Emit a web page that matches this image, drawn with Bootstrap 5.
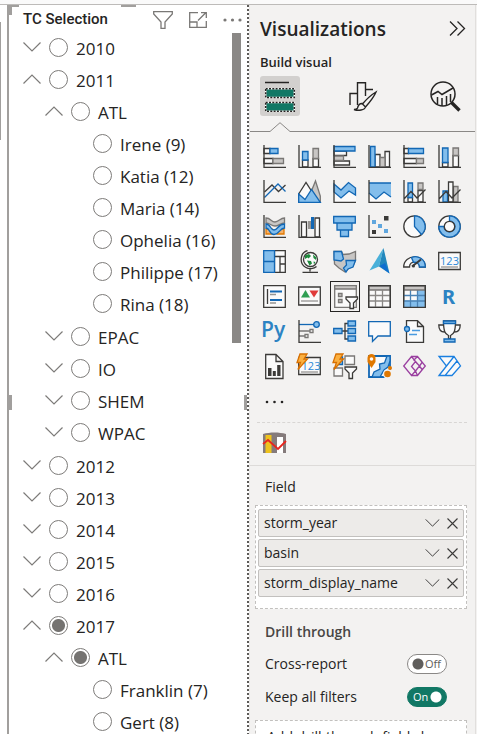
<!DOCTYPE html>
<html lang="en">
<head>
<meta charset="utf-8">
<meta name="viewport" content="width=device-width, initial-scale=1">
<title>TC Selection</title>
<link href="https://cdn.jsdelivr.net/npm/bootstrap@5.3.0/dist/css/bootstrap.min.css" rel="stylesheet">
<style>
body{font-family:"Open Sans","Noto Sans",sans-serif;color:#252423;background:#f3f2f1;font-size:14px;line-height:20px}
button{border:0;background:none;padding:0;color:inherit}
svg{display:block;overflow:visible}
.topstrip{height:5px;background:#fafafa;border-bottom:1px solid #bdbbb9}
.gutter{width:7px;background:#fff;padding-top:17px}
.gutter div{height:118px;width:1px;background:#a19f9d}
.visual{background:#fff;border-left:2px solid #a19f9d;min-width:0}
.visual-head{height:26px;padding:4px 5px 0 14px}
.visual-head h2{font:500 15px/20px Roboto,sans-serif}
.visual-head button{color:#7a7876}
.handle{position:absolute;background:#a19f9d}
.h-top{left:0;top:0;width:10px;height:2px}
.h-corner{left:0;top:0;width:3px;height:10px}
.h-mid{left:47%;top:0;width:15px;height:2px}
.h-left{left:0;top:390px;width:3px;height:15px}
.h-right{right:0;top:390px;width:3px;height:15px}
.scroll-thumb{position:absolute;right:6px;top:28px;width:9px;height:310px;background:#8a8886}
.edge{width:3px;background:linear-gradient(90deg,#fff,#e4e2e0)}
.edge div{width:2px;height:100%;background:repeating-linear-gradient(#5c5a58 0 2px,#fff 2px 4px)}
.tree{font-size:17px;line-height:32px}
.tree ul{padding-left:22px;padding-bottom:1px}
.node{height:32px;padding-left:14px}
.node label{margin-left:8px;white-space:nowrap;padding-top:4px}
.twist{width:18px;height:32px;margin-right:8px;color:#7d7b79}
.tree input{appearance:none;width:19px;height:19px;border:1px solid #7d7b79;border-radius:50%;margin:0;flex:none;background:#fff}
.tree input:checked{background:radial-gradient(circle,#757371 6px,#fff 7px)}
.pane{width:226px;flex:none;background:#f3f2f1;border-right:1px solid #e1dfdd;margin-right:1px}
.pane-head{padding:12px 9px 0 10px;height:47px}
.pane-head h1{font-size:19px;line-height:24px;font-weight:600}
.pane h3{font-size:14px;line-height:20px;font-weight:600}
.pane .build-label{font-size:13px;margin:0 10px}
.tabs{padding:4px 10px 0 10px}
.tab{width:40px;height:40px;display:grid;place-items:center;border-radius:3px}
.tab.on{background:#d2d0ce}
.notch{height:23px;display:flex;padding-top:6px;align-items:flex-start}
.notch i{border-bottom:1px solid #8a8886;height:10px;width:20px}
.notch i+svg+i{flex:1}
.gallery{display:grid;grid-template-columns:repeat(6,35px);margin-left:7px}
.gallery button{height:35px;display:grid;place-items:center}
.gallery .picked{margin:2px 2px 2px 3px;height:31px;border:1px solid #252423}
.more{padding:12px 0 0 14px;height:38px;display:flex;align-items:flex-start}
.custom{border-top:1px dashed #d8d6d4;margin:0 8px 0 7px;padding:8px 6px 0;height:43px}
.wells{border-top:1px solid #dddbd9;padding:11px 8px 0 5px}
.field-label{margin-left:10px}
.well{background:#fff;border:1px dashed #c2c0be;padding:3px 2px;margin-top:8px;height:104px;gap:2px}
.chip{height:28px;background:#edebe9;border:1px solid #c2c0be;border-radius:2px;padding:0 5px}
.chip button{margin-left:7px;color:#3b3a39}
.pane .drill{margin:13px 0 12px 10px;color:#484644}
.opt{height:20px;margin:0 20px 13px 10px}
.switch{position:relative;width:40px;height:20px}
.switch input{appearance:none;position:absolute;inset:0;width:40px;height:20px;margin:0;border:1px solid #8a8886;border-radius:10px;background:radial-gradient(circle at 10px 9px,#605e5c 5px,#fff 6px)}
.switch input:checked{border-color:#117865;background:radial-gradient(circle at 28px 9px,#fff 5px,#117865 6px)}
.switch span{position:relative;display:block;font-size:11px;line-height:20px;padding-left:18px;pointer-events:none;color:#605e5c}
.switch input:checked+span{color:#fff;padding-left:6px}
.drop{background:#fff;border:1px dashed #c2c0be;margin-top:12px;padding:6px 11px;height:40px;white-space:nowrap;overflow:hidden}
.d{stroke:#3b3a38;fill:none}.w{stroke:#3b3a38;fill:#fafafa}
.b{stroke:#1267b4;fill:#83beec}.bn{stroke:#1267b4;fill:none}
.g{stroke:#797775;fill:#c8c6c4}.gw{stroke:#797775;fill:#fafafa}
.gallery svg{stroke-width:1.3}
</style>
</head>
<body class="d-flex flex-column vh-100 overflow-hidden">
<svg width="0" height="0" class="position-absolute"><defs>
<symbol id="dn" viewBox="0 0 18 10"><path d="M.5.5 9 9 17.500.5" fill="none" stroke="currentColor" stroke-width="1.2"/></symbol>
<symbol id="up" viewBox="0 0 18 10"><path d="M.5 9.500 9 1 17.500 9.500" fill="none" stroke="currentColor" stroke-width="1.2"/></symbol>
<symbol id="x" viewBox="0 0 11 11"><path d="M.5.5 10.500 10.500M10.500.5.5 10.500" stroke="currentColor" stroke-width="1.1"/></symbol>
</defs></svg>
<div class="topstrip flex-shrink-0"></div>
<div class="d-flex flex-fill overflow-hidden">
<div class="gutter flex-shrink-0"><div></div></div>
<section class="visual flex-fill position-relative overflow-hidden">
  <span class="handle h-top"></span>
  <span class="handle h-corner"></span>
  <span class="handle h-mid"></span>
  <span class="handle h-left"></span>
  <span class="handle h-right"></span>
  <header class="visual-head d-flex">
    <h2 class="m-0 me-auto">TC Selection</h2>
    <button class="me-3" aria-label="Filters"><svg width="20" height="18" fill="none" stroke="currentColor" stroke-width="1.3"><path d="M.7.7H19.300V3L12 11V17.300H8V11L.7 3Z"/></svg></button>
    <button class="me-3" aria-label="Focus mode"><svg width="18" height="16" fill="none" stroke="currentColor" stroke-width="1.300"><path d="M9 .7H.7V15.300H17.300V9M.7 10H8V15M9 8.500 16.500 1M12 .7H17.300V6"/></svg></button>
    <button aria-label="More options"><svg width="19" height="4" fill="currentColor"><circle cx="2" cy="2" r="1.600"/><circle cx="9.500" cy="2" r="1.600"/><circle cx="17" cy="2" r="1.600"/></svg></button>
  </header>
  <div class="scroll-thumb"></div>
  <ul class="tree list-unstyled m-0">
    <li><div class="node d-flex align-items-center"><button class="twist" aria-label="Expand"><svg width="18" height="10"><use href="#dn"/></svg></button><input type="radio" name="y" id="y10"><label for="y10">2010</label></div></li>
    <li><div class="node d-flex align-items-center"><button class="twist" aria-label="Collapse"><svg width="18" height="10"><use href="#up"/></svg></button><input type="radio" name="y" id="y11"><label for="y11">2011</label></div>
      <ul class="list-unstyled">
        <li><div class="node d-flex align-items-center"><button class="twist" aria-label="Collapse"><svg width="18" height="10"><use href="#up"/></svg></button><input type="radio" name="b11" id="atl11"><label for="atl11">ATL</label></div>
          <ul class="list-unstyled">
            <li class="node d-flex align-items-center"><span class="twist"></span><input type="radio" name="s" id="s9"><label for="s9">Irene (9)</label></li>
            <li class="node d-flex align-items-center"><span class="twist"></span><input type="radio" name="s" id="s12"><label for="s12">Katia (12)</label></li>
            <li class="node d-flex align-items-center"><span class="twist"></span><input type="radio" name="s" id="s14"><label for="s14">Maria (14)</label></li>
            <li class="node d-flex align-items-center"><span class="twist"></span><input type="radio" name="s" id="s16"><label for="s16">Ophelia (16)</label></li>
            <li class="node d-flex align-items-center"><span class="twist"></span><input type="radio" name="s" id="s17"><label for="s17">Philippe (17)</label></li>
            <li class="node d-flex align-items-center"><span class="twist"></span><input type="radio" name="s" id="s18"><label for="s18">Rina (18)</label></li>
          </ul></li>
        <li class="node d-flex align-items-center"><button class="twist" aria-label="Expand"><svg width="18" height="10"><use href="#dn"/></svg></button><input type="radio" name="b11" id="epac"><label for="epac">EPAC</label></li>
        <li class="node d-flex align-items-center"><button class="twist" aria-label="Expand"><svg width="18" height="10"><use href="#dn"/></svg></button><input type="radio" name="b11" id="io"><label for="io">IO</label></li>
        <li class="node d-flex align-items-center"><button class="twist" aria-label="Expand"><svg width="18" height="10"><use href="#dn"/></svg></button><input type="radio" name="b11" id="shem"><label for="shem">SHEM</label></li>
        <li class="node d-flex align-items-center"><button class="twist" aria-label="Expand"><svg width="18" height="10"><use href="#dn"/></svg></button><input type="radio" name="b11" id="wpac"><label for="wpac">WPAC</label></li>
      </ul></li>
    <li class="node d-flex align-items-center"><button class="twist" aria-label="Expand"><svg width="18" height="10"><use href="#dn"/></svg></button><input type="radio" name="y" id="y12"><label for="y12">2012</label></li>
    <li class="node d-flex align-items-center"><button class="twist" aria-label="Expand"><svg width="18" height="10"><use href="#dn"/></svg></button><input type="radio" name="y" id="y13"><label for="y13">2013</label></li>
    <li class="node d-flex align-items-center"><button class="twist" aria-label="Expand"><svg width="18" height="10"><use href="#dn"/></svg></button><input type="radio" name="y" id="y14"><label for="y14">2014</label></li>
    <li class="node d-flex align-items-center"><button class="twist" aria-label="Expand"><svg width="18" height="10"><use href="#dn"/></svg></button><input type="radio" name="y" id="y15"><label for="y15">2015</label></li>
    <li class="node d-flex align-items-center"><button class="twist" aria-label="Expand"><svg width="18" height="10"><use href="#dn"/></svg></button><input type="radio" name="y" id="y16"><label for="y16">2016</label></li>
    <li><div class="node d-flex align-items-center"><button class="twist" aria-label="Collapse"><svg width="18" height="10"><use href="#up"/></svg></button><input type="radio" name="y" id="y17" checked><label for="y17">2017</label></div>
      <ul class="list-unstyled">
        <li><div class="node d-flex align-items-center"><button class="twist" aria-label="Collapse"><svg width="18" height="10"><use href="#up"/></svg></button><input type="radio" name="b17" id="atl17" checked><label for="atl17">ATL</label></div>
          <ul class="list-unstyled">
            <li class="node d-flex align-items-center"><span class="twist"></span><input type="radio" name="s" id="t7"><label for="t7">Franklin (7)</label></li>
            <li class="node d-flex align-items-center"><span class="twist"></span><input type="radio" name="s" id="t8"><label for="t8">Gert (8)</label></li>
          </ul></li>
      </ul></li>
  </ul>
</section>
<div class="edge flex-shrink-0"><div></div></div>
<aside class="pane">
  <div class="pane-head d-flex justify-content-between">
    <h1 class="m-0">Visualizations</h1>
    <button class="align-self-start mt-1" aria-label="Collapse pane"><svg width="17" height="15" fill="none" stroke="#252423" stroke-width="1.300"><path d="M1 .5 8 7.500 1 14.500M8.500.5 15.500 7.500 8.500 14.500"/></svg></button>
  </div>
  <h3 class="build-label">Build visual</h3>
  <div class="tabs d-flex justify-content-between">
    <button class="tab on" aria-label="Build visual"><svg width="30" height="31"><path d="M0 1.500H24" stroke="#252423" stroke-width="1.500"/><path d="M.7 7.700H29.300V16.500H.7ZM.7 21.500H29.300V30.300H.7Z" fill="#117865" stroke="#fff" stroke-width="1.500"/><path d="M.7 7.700H29.300V16.500H.7ZM.7 21.500H29.300V30.300H.7Z" fill="none" stroke="#252423" stroke-width="1.500" stroke-dasharray="2 1.300"/></svg></button>
    <button class="tab" aria-label="Format visual"><svg width="28" height="30" fill="none" stroke="#252423" stroke-width="1.400"><path d="M1 24V12.500H8.500V24M8.500 15V1.700H16.500V15M16.500 8.500H24"/><path d="M27 11C22 14 16 20 13.500 23L16.500 26C20 22 25 16 27 11ZM13.500 22.500C10 22 9 25 8.500 27 8 28.500 6.500 28.500 5 28.500 9 30 16 29.500 16.500 25.500" fill="#f3f2f1"/></svg></button>
    <button class="tab" aria-label="Analytics"><svg width="31" height="31" fill="none" stroke="#252423" stroke-width="1.500"><circle cx="13" cy="13" r="12"/><path d="M1.500 14 8 10.500 12 13.500 23 7"/><path d="M7.500 16V23M12 17V25M16.500 15V24M20.500 13V21"/><path d="M21.500 21.500 29.500 29.500" stroke-width="3.300"/></svg></button>
  </div>
  <div class="notch"><i></i><svg width="20" height="10" fill="none" stroke="#8a8886"><path d="M0 9.500 10 .7 20 9.500"/></svg><i></i></div>
  <div class="gallery">
    <button aria-label="Stacked bar chart"><svg width="23" height="23"><path class="w" d="M1 3.500H7V8.500H1ZM1 13.500H10V18.500H1Z"/><path class="b" d="M7 3.500H15V8.500H7Z"/><path class="g" d="M10 13.500H20.500V18.500H10Z"/><path class="d" d="M1 0V22.300H23"/></svg></button>
    <button aria-label="Stacked column chart"><svg width="23" height="23"><path class="w" d="M4.500 15H10V22H4.500ZM15 13.500H20.500V22H15Z"/><path class="b" d="M4.500 6.500H10V15H4.500Z"/><path class="g" d="M15 3.500H20.500V13.500H15Z"/><path class="d" d="M1 0V22.300H23"/></svg></button>
    <button aria-label="Clustered bar chart"><svg width="23" height="23"><path class="w" d="M1 6H13.500V10.500H1ZM1 16H16.500V20H1Z"/><path class="g" d="M1 11H10.500V15.500H1Z"/><path class="b" d="M1 1.500H22V6H1Z"/><path class="d" d="M1 0V22.300H23"/></svg></button>
    <button aria-label="Clustered column chart"><svg width="23" height="23"><path class="w" d="M7 9.500H12V22H7ZM17 6.500H21.500V22H17Z"/><path class="g" d="M12 12.500H17V22H12Z"/><path class="b" d="M2.500 1.500H7V22H2.500Z"/><path class="d" d="M1 0V22.300H23"/></svg></button>
    <button aria-label="100% stacked bar chart"><svg width="23" height="23"><path class="w" d="M1 3.500H5.500V8.500H1ZM1 13.500H13.500V18.500H1Z"/><path class="b" d="M5.500 3.500H20.500V8.500H5.500Z"/><path class="g" d="M13.500 13.500H20.500V18.500H13.500Z"/><path class="d" d="M1 0V22.300H23"/></svg></button>
    <button aria-label="100% stacked column chart"><svg width="23" height="23"><path class="w" d="M4.500 17.500H10V22H4.500ZM15 10.500H20.500V22H15Z"/><path class="b" d="M4.500 3H10V17.500H4.500Z"/><path class="g" d="M15 3H20.500V10.500H15Z"/><path class="d" d="M1 0V22.300H23"/></svg></button>

    <button aria-label="Line chart"><svg width="23" height="23"><path class="d" d="M1.500 12 9 5 15.500 11.500 22.500 5"/><path class="bn" d="M1.500 17.500 15 4 22.500 11.500"/><path class="d" d="M1 0V22.300H23"/></svg></button>
    <button aria-label="Area chart"><svg width="23" height="23"><path class="g" d="M9 22 17.500 1 22.300 16V22Z"/><path class="w" d="M.7 14 8 2.500 16 15 12 22H.7Z"/><path class="b" d="M.7 14 7 19.500 13.500 9.500 22.300 22.300H.7Z"/></svg></button>
    <button aria-label="Stacked area chart"><svg width="23" height="23"><path d="M1 12 8 18 16 11 23 15V22H1Z" fill="#fafafa"/><path class="b" d="M1 4 8 10 15.500 2.500 22.500 8V15L16 11 8 18 1 12Z"/><path class="d" d="M1 0V22.300H23"/></svg></button>
    <button aria-label="100% stacked area chart"><svg width="23" height="23"><path d="M1 12 8 18 16 11 23 15V22H1Z" fill="#fafafa"/><path fill="#83beec" d="M1 3H23V17L16 12 8 19 1 13Z"/><path class="bn" d="M1 3H23M23 17 16 12 8 19 1 13"/><path class="d" d="M1 0V22.300H23"/></svg></button>
    <button aria-label="Line and stacked column chart"><svg width="23" height="23"><path class="w" d="M5 17.500H9.500V22H5ZM15 10.500H20V22H15Z"/><path class="b" d="M5 3H9.500V17.500H5Z"/><path class="g" d="M15 3H20V9.500H15Z"/><path class="d" d="M1 0V22.300H23M1 19 8 11.500 14 18 22.500 9.500"/></svg></button>
    <button aria-label="Line and clustered column chart"><svg width="23" height="23"><path class="b" d="M5 11H9.500V22H5Z"/><path class="g" d="M15.500 6.500H20V22H15.500Z"/><path class="w" d="M10.500 2H15V22H10.500Z"/><path class="d" d="M1 0V22.300H23M1 19 8 11.500 14 18 22.500 9.500"/></svg></button>

    <button aria-label="Ribbon chart"><svg width="23" height="23"><path d="M3 14H9V19H3ZM14 14H21V19H14Z" fill="#f5b26b" stroke="#e07800"/><path class="g" d="M3 3C8 3 8 7 12 7S17 3 21.500 3V8C17 8 16 11 12 11S7 8 3 8Z"/><path class="b" d="M3 9C8 9 7 15 11 15S15 9 21.500 9V13C17 13 16 19.500 11 19.500S7 13 3 13Z"/><path class="d" d="M1 0V22.300H23"/></svg></button>
    <button aria-label="Waterfall chart"><svg width="23" height="23"><path class="w" d="M3.500 7H8.500V22H3.500ZM17 3H21.500V22H17Z"/><path d="M10 6H13.500V14H10Z" fill="#979593"/><path d="M13 2H16V14H13Z" fill="#1267b4"/><path class="d" d="M1 0V22.300H23"/></svg></button>
    <button aria-label="Funnel"><svg width="23" height="23"><path class="b" d="M.7 1.500H22.300V8H.7ZM4 8H19V15H4ZM7.500 15H15.500V21.500H7.500Z"/></svg></button>
    <button aria-label="Scatter chart"><svg width="23" height="23"><path d="M16 1H20.500V5.500H16ZM4 15H8V19H4Z" fill="#3b3a38"/><path d="M4 5H8V9H4ZM10 9H14V13H10ZM16 14H20V18H16Z" fill="#5fa6de"/><path class="d" d="M1 0V22.300H23"/></svg></button>
    <button aria-label="Pie chart"><svg width="23" height="23"><circle class="w" cx="11.500" cy="11.500" r="10.700"/><path class="b" d="M11.500.8A10.700 10.700 0 0 1 18.500 19.500L11.500 11.500Z"/></svg></button>
    <button aria-label="Donut chart"><svg width="23" height="23"><circle class="w" cx="11.500" cy="11.500" r="10.700"/><path class="b" d="M11.500.8A10.700 10.700 0 1 1 .8 11.500H6A5.500 5.500 0 1 0 11.500 6Z"/><circle class="w" cx="11.500" cy="11.500" r="5.200"/></svg></button>

    <button aria-label="Treemap"><svg width="23" height="23"><path class="w" d="M11.500.7H22.300V22.300H11.500ZM11.500 6.500H22.300M11.500 6.500H17V22M17 14H22"/><path class="b" d="M.7.7H11.500V22.300H.7ZM.7 11.500H11.500"/></svg></button>
    <button aria-label="Map"><svg width="23" height="23"><circle class="w" cx="12.500" cy="9.500" r="7"/><path fill="#1e8a3c" d="M7 5.500 11 4 13 6 10.500 8.500 9.500 7.500 7 9ZM15 4.500 18.500 7.500 18 10 15.500 8ZM9 10.500 13 11 14 13.500 11.500 15.500ZM15.500 11.500 17.500 12 16 14.500Z"/><path class="d" d="M9.500.6C2 2.500 1 13.500 7.500 17.200 11 19.500 16 19 18.500 16.500M12 18.500V21.500M4.500 22.300H20"/></svg></button>
    <button aria-label="Filled map"><svg width="23" height="23"><path class="g" d="M1 1.500 8.500 1.500 10 4.500 16 4 22.500 1.500V10L20 16 15 19 12 22 6 18 1.500 14Z"/><path class="b" d="M1 1.500H8.500L10.500 9 8 11 1 10ZM13 10.500H22.500L20 17 15 19 13 22 10.500 18 13.500 15Z"/></svg></button>
    <button aria-label="Azure map"><svg width="23" height="25"><path d="M15.500-1 1.500 21.500 11 17.500Z" fill="#49b0d9"/><path d="M15.500-1 11 17.500 21.500 24.500Z" fill="#2288bd"/><path d="M11.500 17 17 14 21.500 24.500Z" fill="#0f6ed0"/></svg></button>
    <button aria-label="Gauge"><svg width="23" height="23"><path class="w" d="M.7 17C.7 3.500 22.300 3.500 22.300 17H16.500C16.500 10.500 6.500 10.500 6.500 17Z"/><path class="b" d="M8.500 7.500C15 5 22.300 9 22.300 17H16.500C16.500 14 14 12 10.500 12.300Z"/><path d="M9 16.500 18 9.500" class="d" stroke-width="2"/><circle cx="10.500" cy="16" r="1.500" fill="#3b3a38"/></svg></button>
    <button aria-label="Card"><svg width="23" height="23"><path class="w" d="M.7 2.500H22.300V19.500H.7Z"/><path d="M3 17H20" stroke="#979593"/><text x="11.500" y="14.500" text-anchor="middle" font-size="11" fill="#2b88d8">123</text></svg></button>

    <button aria-label="Multi-row card"><svg width="23" height="23"><path class="w" d="M.7.7H22.300V22.300H.7Z"/><path class="d" d="M4.500 4V19"/><path d="M7 6.500H19M7 15H19" stroke="#1267b4" stroke-width="2"/><path d="M7 9.500H13M7 18H13" stroke="#979593" stroke-width="1.500"/></svg></button>
    <button aria-label="KPI"><svg width="23" height="23"><path class="w" d="M.7 2H22.300V20H.7Z"/><path d="M3 12.500 7.500 5 12 12.500Z" fill="#2f9e52"/><path d="M11.500 5.500H20.500L16 12.500Z" fill="#e03b3b"/><path d="M3 16H20" stroke="#979593"/></svg></button>
    <button class="picked" aria-label="Slicer"><svg width="23" height="23"><path class="gw" d="M.7.7H22.300V22.300H.7Z"/><path class="g" d="M.7.7H22.300V4H.7ZM4.500 8.500H8V11.500H4.500ZM4.500 14.500H8V17.500H4.500Z"/><path class="w" d="M12 12H23.500V14L19.500 18V23.500H16V18L12 14Z"/></svg></button>
    <button aria-label="Table"><svg width="23" height="23"><path class="w" d="M.7.7H22.300V22.300H.7Z"/><path class="g" d="M1 1H22V5H1Z"/><path d="M1 10.500H22M1 16H22M7.500 5V22M14.500 5V22" stroke="#8a8886"/><path class="d" d="M.7.7H22.300V22.300H.7Z"/></svg></button>
    <button aria-label="Matrix"><svg width="23" height="23"><path class="w" d="M.7.7H22.300V22.300H.7Z"/><path fill="#83beec" d="M14.500 5H22V22H1V15.500H14.500Z"/><path d="M1 10.500H22M1 16H22M7.500 5V22M14.500 5V22" stroke="#4b83b5"/><path class="g" d="M1 1H22V5H1Z"/><path class="d" d="M.7.7H22.300V22.300H.7Z"/></svg></button>
    <button aria-label="R script visual"><svg width="23" height="23"><text x="4" y="18.500" font-size="20" font-weight="700" font-family="Noto Sans" fill="#2c83c3">R</text></svg></button>

    <button aria-label="Python visual"><svg width="23" height="23"><text x="-2" y="17" font-size="21" font-weight="600" font-family="Open Sans" fill="#2c83c3">Py</text></svg></button>
    <button aria-label="Key influencers"><svg width="23" height="23"><path d="M1 4.500H16" class="bn"/><circle class="b" cx="18.500" cy="4.500" r="2.800"/><path class="gw" d="M1 11H12M12 9.500H15V12.500H12ZM1 16H7M7 14.500H10V17.500H7Z"/><path class="d" d="M1 0V22.300H23"/></svg></button>
    <button aria-label="Decomposition tree"><svg width="23" height="23"><path class="d" d="M9 11H15M15 3.500H12V19H15"/><path class="b" d="M.7 8.500H9V13.500H.7ZM15 1H22.500V6H15ZM15 8.500H22.500V13.500H15ZM15 16H22.500V21H15Z"/></svg></button>
    <button aria-label="Q&amp;A"><svg width="23" height="23"><path d="M.7 1.700H22.300V16H10L4.500 21.500V16H.7Z" fill="#fafafa" stroke="#1267b4"/></svg></button>
    <button aria-label="Smart narrative"><svg width="23" height="23"><path class="w" d="M3.500.7H14.500L20.500 6.500V22.300H3.500ZM14.500.7V6.500H20.500"/><circle class="b" cx="4" cy="9" r="2.500"/><path d="M9 10.500H17M6 14.500H14" stroke="#4a9be0"/></svg></button>
    <button aria-label="Goals"><svg width="23" height="23"><path class="w" d="M5 5H.8C.8 10 3 12 6.500 12M18 5H22.200C22.200 10 20 12 16.500 12M5.500 1H17.500C17.500 11 16 14 12.500 15.500V19H10.500V15.500C7 14 5.500 11 5.500 1Z"/><path class="b" d="M5.500 1H17.500V3.500H5.500ZM6 19H17V22H6Z"/></svg></button>

    <button aria-label="Paginated report"><svg width="23" height="23"><path class="w" d="M2.700-.5H13L20 6.500V23.500H2.700ZM13-.5V6.500H20"/><path fill="#3b3a38" d="M5 13H8.500V21H5ZM9.800 16H12.800V21H9.800ZM14.200 10H17.500V21H14.200Z"/></svg></button>
    <button aria-label="Card (new)"><svg width="23" height="23"><path class="w" d="M.7 2.500H22.300V19.500H.7Z"/><path d="M3 17H20" stroke="#979593"/><text x="13" y="14.500" text-anchor="middle" font-size="11" fill="#2b88d8">123</text><path d="M2-1H9L6 4H9.500L0 14.500 2.500 7.500H-1Z" fill="#fbb040" stroke="#d87000"/></svg></button>
    <button aria-label="Slicer (new)"><svg width="23" height="23"><path class="gw" d="M12 1H21.500V9.500H12ZM1 13H9.500V21H1Z"/><path class="b" d="M5 2H9.500V9.500H5Z"/><path class="w" d="M12 12H23.500V14L19.500 18V23.500H16V18L12 14Z"/><path d="M3-1H10L7 4H10.500L1 14.500 3.500 7.500H0Z" fill="#fbb040" stroke="#d87000"/></svg></button>
    <button aria-label="ArcGIS Maps"><svg width="23" height="23"><path d="M1 1H22V22H1Z" fill="#fafafa" stroke="#1267b4" stroke-width="1.800"/><path class="b" d="M19 1 16.500 8 11.500 9 12 14 6 17 4 22H12L16 15 20 12 22 6V1Z"/><circle cx="20" cy="19" r="5" fill="#f3f2f1"/><circle cx="19.500" cy="19" r="3.300" fill="#e07800"/><circle cx="22" cy="13" r="2" fill="#e07800"/><path d="M-.5 3C-.5-2.500 7.500-2.500 7.500 3V7L3.500 13-.5 7Z" fill="#e07800"/><circle cx="3.500" cy="4" r="1.800" fill="#fafafa"/></svg></button>
    <button aria-label="Power Apps"><svg width="23" height="23" fill="none" stroke="#9a3fa0"><path d="M8.500 1.500 .7 11 8.500 20.500 12.500 16 8.500 11.500 12.500 6.500ZM12.500 6.500 16.500 11 12.500 16M8.500 1.500H14.500L22.300 11 14.500 20.500H8.500M14.500 1.500 10.500 5.500M12.500 6.500 14.500 9M16.500 11 19 7.500M16.500 11 19 14.500M12.500 16 14.500 20.500"/></svg></button>
    <button aria-label="Power Automate"><svg width="23" height="23" fill="#fafafa" stroke="#1a7fe0"><path d="M1 1.500H16L22.500 11 14 20.500H1L8.500 11ZM8.500 11 1 20.500 16 1.500M14 20.500H7L19 6"/></svg></button>
  </div>
  <div class="more"><button aria-label="More visuals"><svg width="21" height="9" fill="#252423"><circle cx="3" cy="6" r="1.300"/><circle cx="10.500" cy="6" r="1.300"/><circle cx="18" cy="6" r="1.300"/></svg></button></div>
  <div class="custom"><button aria-label="Custom visual"><svg width="23" height="22"><path d="M0 3C7 1 16 1 23 3V22H0Z" fill="#857b7b"/><path d="M2.500 4H8.500V22H2.500Z" fill="#eec21c"/><path d="M14 6H20V22H14Z" fill="#fff"/><path d="M0 13 5 9 15 18 23 10" fill="none" stroke="#e8261e" stroke-width="1.800"/></svg></button></div>
  <div class="wells">
    <div class="field-label">Field</div>
    <div class="well d-flex flex-column">
      <div class="chip d-flex align-items-center"><span class="me-auto">storm_year</span><button aria-label="Options"><svg width="15" height="8"><use href="#dn"/></svg></button><button aria-label="Remove"><svg width="11" height="11"><use href="#x"/></svg></button></div>
      <div class="chip d-flex align-items-center"><span class="me-auto">basin</span><button aria-label="Options"><svg width="15" height="8"><use href="#dn"/></svg></button><button aria-label="Remove"><svg width="11" height="11"><use href="#x"/></svg></button></div>
      <div class="chip d-flex align-items-center"><span class="me-auto">storm_display_name</span><button aria-label="Options"><svg width="15" height="8"><use href="#dn"/></svg></button><button aria-label="Remove"><svg width="11" height="11"><use href="#x"/></svg></button></div>
    </div>
    <h3 class="drill">Drill through</h3>
    <div class="opt d-flex justify-content-between align-items-center"><label for="cr">Cross-report</label><div class="switch"><input type="checkbox" role="switch" id="cr"><span>Off</span></div></div>
    <div class="opt d-flex justify-content-between align-items-center"><label for="kf">Keep all filters</label><div class="switch"><input type="checkbox" role="switch" id="kf" checked><span>On</span></div></div>
    <div class="drop">Add drill-through fields here</div>
  </div>
</aside>
</div>
<script src="https://cdn.jsdelivr.net/npm/bootstrap@5.3.0/dist/js/bootstrap.bundle.min.js"></script>
</body>
</html>
